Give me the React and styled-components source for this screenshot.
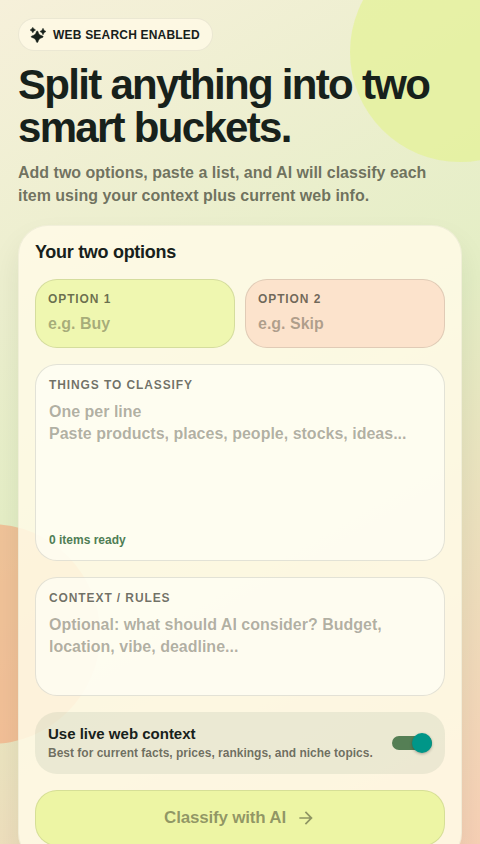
import React, { useState } from 'react';
import styled, { createGlobalStyle } from 'styled-components';
import { MdArrowForward } from 'react-icons/md';

const GlobalStyle = createGlobalStyle`
    * {
        box-sizing: border-box;
    }
    body {
        margin: 0;
        font-family: "Liberation Sans", Arial, sans-serif;
        font-weight: 700;
        color: #17211b;
    }
    input, textarea, button {
        font: inherit;
        color: inherit;
    }
`;

const Screen = styled.div`
    position: relative;
    height: 100vh;
    overflow: hidden;
    background: linear-gradient(150deg, #f6f0da 0%, #e4eec5 49%, #f7d0b5 100%);
`;

// decorative circles behind the content
const Orb = styled.div`
    position: absolute;
    width: 220px;
    height: 220px;
    border-radius: 50%;
`;

const LimeOrb = styled(Orb)`
    top: -58px;
    right: -90px;
    background: rgba(228, 242, 148, 0.7);
`;

const PeachOrb = styled(Orb)`
    bottom: 100px;
    left: -120px;
    background: rgba(247, 166, 123, 0.6);
`;

const Scroller = styled.main`
    position: relative;
    height: 100%;
    overflow-y: auto;
    scrollbar-width: none;
    padding: 18px;
`;

const Badge = styled.div`
    display: inline-flex;
    align-items: center;
    gap: 7px;
    height: 33px;
    padding: 0 12px 0 11px;
    border: 1px solid rgba(23, 33, 27, 0.08);
    border-radius: 17px;
    background: rgba(255, 250, 230, 0.8);
    font-size: 12px;
    letter-spacing: 0.2px;
`;

const Title = styled.h1`
    margin: 12px 0;
    font-size: 42px;
    line-height: 43px;
    letter-spacing: -1.7px;
`;

const Subtitle = styled.p`
    margin: 0 0 18px;
    font-size: 16px;
    line-height: 23px;
    color: rgba(27, 32, 20, 0.62);
`;

const Card = styled.form`
    display: flex;
    flex-direction: column;
    gap: 16px;
    padding: 16px;
    border: 1px solid rgba(23, 33, 27, 0.05);
    border-radius: 30px;
    background: rgba(255, 250, 230, 0.86);
    box-shadow: 0 16px 30px rgba(23, 33, 27, 0.08);
`;

const CardTitle = styled.h2`
    margin: 0;
    font-size: 18px;
    line-height: 21px;
    letter-spacing: -0.3px;
`;

const OptionRow = styled.div`
    display: grid;
    grid-template-columns: 1fr 1fr;
    gap: 10px;
`;

const Field = styled.div`
    display: flex;
    flex-direction: column;
    gap: 9px;
    padding: 13px;
    border: 1px solid rgba(23, 33, 27, 0.12);
    border-radius: 22px;
    background: rgba(255, 255, 248, 0.66);
`;

const OptionField = styled(Field)`
    gap: 7px;
    padding: 12px;
    background: ${({ $color }) => $color};
`;

const Label = styled.label`
    font-size: 12px;
    line-height: 14px;
    letter-spacing: 0.9px;
    text-transform: uppercase;
    color: rgba(27, 32, 20, 0.64);
`;

const TextInput = styled.input`
    width: 100%;
    height: 22px;
    padding: 0;
    border: 0;
    outline: 0;
    background: transparent;
    font-size: 16px;
    &::placeholder {
        color: rgba(30, 32, 16, 0.36);
        opacity: 1;
    }
`;

const TextArea = styled.textarea`
    display: block;
    width: 100%;
    height: ${({ $height }) => $height}px;
    padding: 0;
    border: 0;
    outline: 0;
    resize: none;
    background: transparent;
    font-size: 16px;
    line-height: 22px;
    &::placeholder {
        color: rgba(30, 32, 16, 0.36);
        opacity: 1;
    }
`;

const Count = styled.div`
    font-size: 12px;
    line-height: 14px;
    color: #4f7d55;
`;

const ToggleRow = styled.div`
    display: flex;
    align-items: center;
    justify-content: space-between;
    gap: 12px;
    padding: 13px;
    border-radius: 22px;
    background: rgba(79, 115, 85, 0.1);
`;

const ToggleText = styled.label`
    display: flex;
    flex-direction: column;
    gap: 3px;
    font-size: 15px;
    line-height: 18px;
    small {
        font-size: 12px;
        line-height: 15px;
        color: rgba(27, 32, 20, 0.62);
    }
`;

const Switch = styled.input`
    appearance: none;
    position: relative;
    display: flex;
    align-items: center;
    flex-shrink: 0;
    width: 40px;
    height: 20px;
    margin: 0;
    cursor: pointer;
    &::before {
        content: '';
        width: 40px;
        height: 14px;
        border-radius: 7px;
        background: ${({ checked }) => (checked ? '#557f55' : '#939393')};
    }
    &::after {
        content: '';
        position: absolute;
        left: ${({ checked }) => (checked ? '20px' : '0')};
        width: 20px;
        height: 20px;
        border-radius: 50%;
        background: ${({ checked }) => (checked ? '#009688' : '#fafafa')};
        box-shadow: 0 1px 3px rgba(0, 0, 0, 0.3);
    }
`;

const SubmitButton = styled.button`
    display: flex;
    align-items: center;
    justify-content: center;
    gap: 10px;
    height: 56px;
    border: 1px solid rgba(23, 33, 27, 0.1);
    border-radius: 22px;
    background: #edf5a4;
    font-size: 17px;
    letter-spacing: -0.2px;
    color: rgba(27, 32, 20, 0.45);
`;

const Sparkles = () => (
    <svg
        width="16"
        height="16"
        viewBox="0 0 16 16"
        fill="currentColor"
        stroke="currentColor"
        strokeWidth="0.5"
        strokeLinejoin="round"
        aria-hidden="true"
    >
        <path d="M7.2 4Q7.8 4 8 4.7C8.6 7.1 9.6 8.1 12.4 8.9Q13.2 9.2 13.2 9.7T12.4 10.5C9.6 11.3 8.6 12.3 8 14.8Q7.8 15.5 7.2 15.5T6.4 14.8C5.8 12.3 4.8 11.3 2 10.5Q1.2 10.2 1.2 9.7T2 8.9C4.8 8.1 5.8 7.1 6.4 4.7Q6.6 4 7.2 4Z" />
        <path d="M2.8.5Q3.2.5 3.3.9C3.6 1.9 4 2.2 5 2.5Q5.4 2.7 5.4 3T5 3.5C4 3.8 3.6 4.1 3.3 5.2Q3.2 5.6 2.8 5.6T2.3 5.2C2 4.1 1.6 3.8.7 3.5Q.3 3.3.3 3T.7 2.5C1.6 2.2 2 1.9 2.3.9Q2.4.5 2.8.5Z" />
        <path d="M13 1.4Q13.4 1.4 13.5 1.9C13.8 3.3 14.3 3.7 15.4 4Q15.7 4.2 15.7 4.5T15.4 5C14.3 5.3 13.8 5.7 13.5 7.1Q13.4 7.6 13 7.6T12.5 7.1C12.2 5.7 11.7 5.3 10.6 5Q10.2 4.8 10.2 4.5T10.6 4C11.7 3.7 12.2 3.3 12.5 1.9Q12.6 1.4 13 1.4Z" />
    </svg>
);

const App = () => {
    const [items, setItems] = useState('');
    const [live, setLive] = useState(true);
    const count = items.split('\n').filter(line => line.trim()).length;

    return (
        <>
            <GlobalStyle />
            <Screen>
                <LimeOrb />
                <PeachOrb />
                <Scroller>
                    <header>
                        <Badge>
                            <Sparkles />
                            WEB SEARCH ENABLED
                        </Badge>
                        <Title>Split anything into two smart buckets.</Title>
                        <Subtitle>
                            Add two options, paste a list, and AI will classify each item
                            using your context plus current web info.
                        </Subtitle>
                    </header>
                    <Card onSubmit={e => e.preventDefault()}>
                        <CardTitle>Your two options</CardTitle>
                        <OptionRow>
                            <OptionField $color="#eff7b0">
                                <Label htmlFor="option1">Option 1</Label>
                                <TextInput id="option1" placeholder="e.g. Buy" />
                            </OptionField>
                            <OptionField $color="#fce3cc">
                                <Label htmlFor="option2">Option 2</Label>
                                <TextInput id="option2" placeholder="e.g. Skip" />
                            </OptionField>
                        </OptionRow>
                        <Field>
                            <Label htmlFor="items">Things to classify</Label>
                            <TextArea
                                id="items"
                                $height={123}
                                value={items}
                                onChange={e => setItems(e.target.value)}
                                placeholder={'One per line\nPaste products, places, people, stocks, ideas...'}
                            />
                            <Count>{count} items ready</Count>
                        </Field>
                        <Field>
                            <Label htmlFor="context">Context / rules</Label>
                            <TextArea
                                id="context"
                                $height={68}
                                placeholder="Optional: what should AI consider? Budget, location, vibe, deadline..."
                            />
                        </Field>
                        <ToggleRow>
                            <ToggleText htmlFor="live">
                                Use live web context
                                <small>Best for current facts, prices, rankings, and niche topics.</small>
                            </ToggleText>
                            <Switch
                                id="live"
                                type="checkbox"
                                checked={live}
                                onChange={e => setLive(e.target.checked)}
                            />
                        </ToggleRow>
                        <SubmitButton type="submit" disabled={!count}>
                            Classify with AI
                            <MdArrowForward size={20} />
                        </SubmitButton>
                    </Card>
                </Scroller>
            </Screen>
        </>
    );
};

export default App;
